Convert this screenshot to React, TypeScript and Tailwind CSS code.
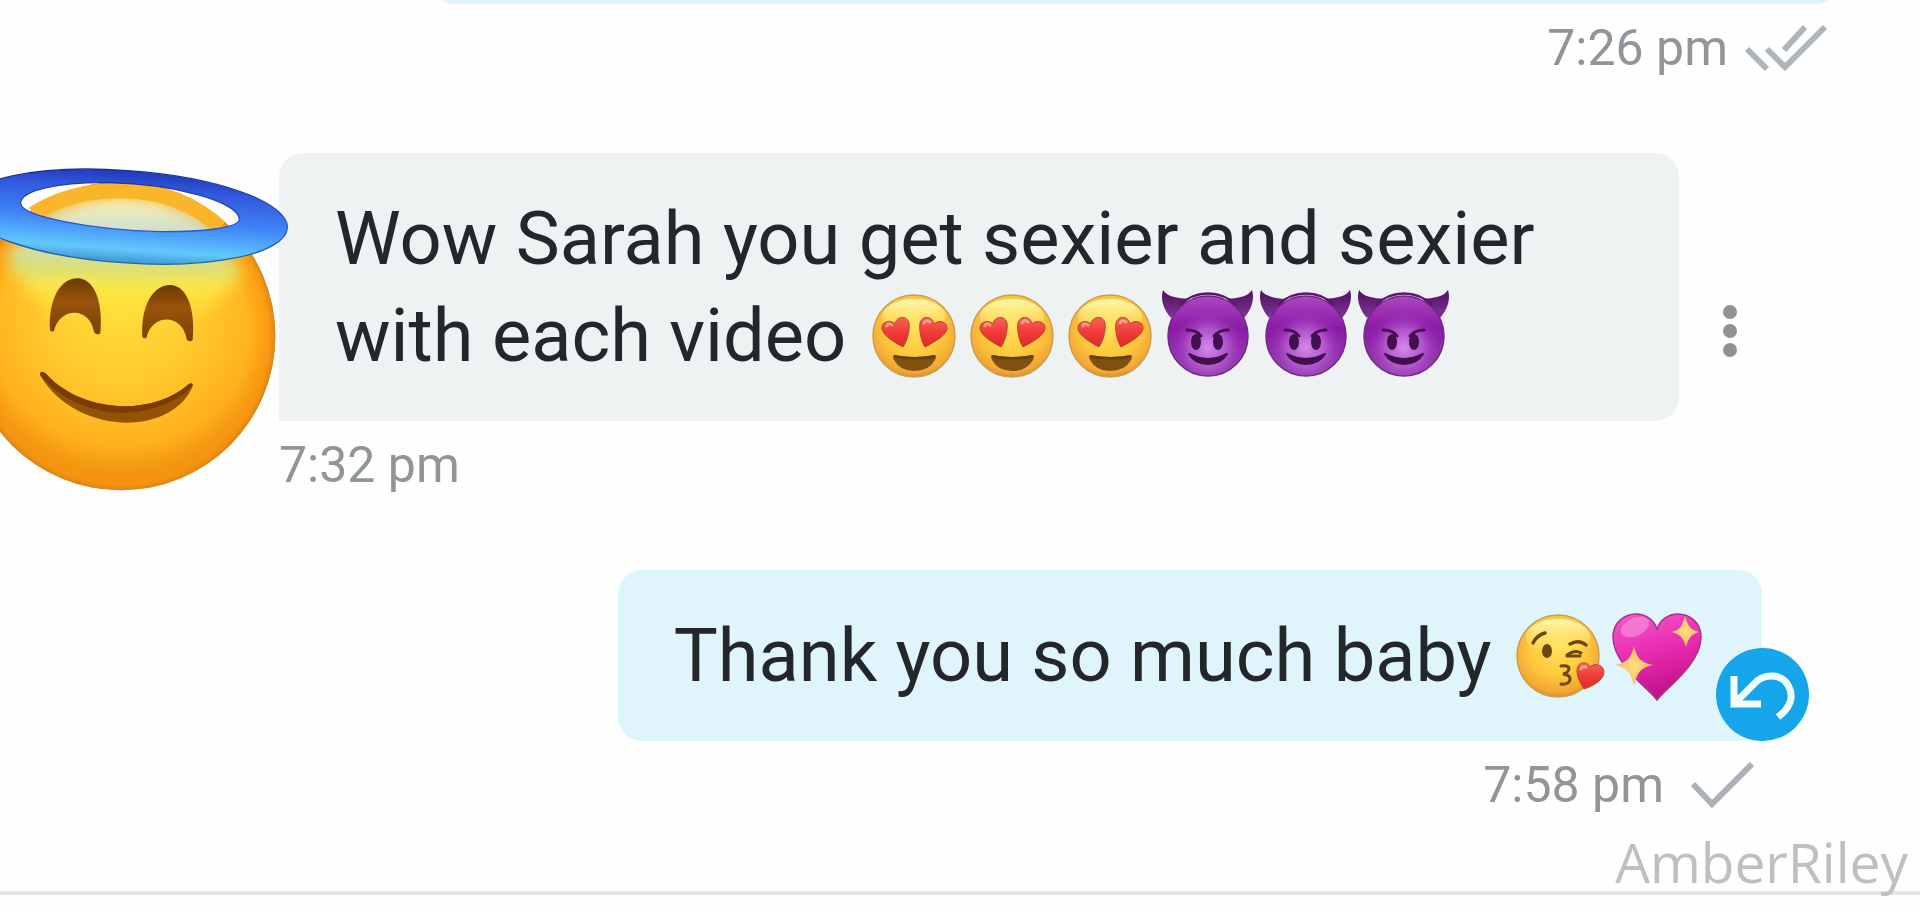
import type { ReactNode } from 'react';

function EmojiDefs() {
  return (
    <svg width="0" height="0" className="absolute" aria-hidden="true">
      <defs>
        <radialGradient id="face" cx="0.5" cy="0.38" r="0.64">
          <stop offset="0" stopColor="#ffe25c" />
          <stop offset="0.55" stopColor="#fdc93c" />
          <stop offset="0.88" stopColor="#f3a634" />
          <stop offset="1" stopColor="#c98a2e" />
        </radialGradient>
        <linearGradient id="shine" x1="0" y1="0" x2="0" y2="1">
          <stop offset="0" stopColor="#fffbb8" stopOpacity="0.95" />
          <stop offset="1" stopColor="#ffe763" stopOpacity="0" />
        </linearGradient>
        <linearGradient id="redHeart" x1="0" y1="0" x2="0" y2="1">
          <stop offset="0" stopColor="#f4655a" />
          <stop offset="0.5" stopColor="#f23a39" />
          <stop offset="1" stopColor="#dd2a2a" />
        </linearGradient>
        <linearGradient id="devilFace" x1="0" y1="0" x2="0" y2="1">
          <stop offset="0" stopColor="#ac48c0" />
          <stop offset="0.4" stopColor="#8a1aa6" />
          <stop offset="1" stopColor="#9a46b2" />
        </linearGradient>
        <radialGradient id="devilGlow" cx="0.5" cy="0.65" r="0.5">
          <stop offset="0" stopColor="#d48aea" />
          <stop offset="0.5" stopColor="#bb60d6" stopOpacity="0.75" />
          <stop offset="1" stopColor="#8c1fa8" stopOpacity="0" />
        </radialGradient>
        <linearGradient id="horn" x1="0" y1="0" x2="0" y2="1">
          <stop offset="0" stopColor="#4f0f5c" />
          <stop offset="1" stopColor="#80359a" />
        </linearGradient>
        <linearGradient id="pinkHeart" x1="0" y1="0" x2="0.3" y2="1">
          <stop offset="0" stopColor="#f25cc9" />
          <stop offset="0.5" stopColor="#e92db2" />
          <stop offset="1" stopColor="#c4128c" />
        </linearGradient>
        <radialGradient id="sparkle">
          <stop offset="0" stopColor="#ffe07a" />
          <stop offset="1" stopColor="#f9b66a" />
        </radialGradient>
      </defs>
    </svg>
  );
}

function Emoji({ label, children }: { label: string; children: ReactNode }) {
  return (
    <svg
      role="img"
      aria-label={label}
      viewBox="0 -1 98 84"
      className="inline-block h-[84px] w-[98px] overflow-visible align-middle"
    >
      {children}
    </svg>
  );
}

function HeartEyes() {
  return (
    <Emoji label="heart eyes">
      <circle cx="49" cy="36" r="41" fill="url(#face)" stroke="#c9a050" strokeWidth="1.5" />
      <ellipse cx="49" cy="17" rx="32" ry="18" fill="url(#shine)" />
      <g fill="url(#redHeart)" stroke="#b8442a" strokeWidth="1">
        <path d="M38 47 C31 43 19 37 17 29 C16 22 25 19 30 24 C31 16 42 15 44 23 C45 31 42 41 38 47Z" />
        <path d="M60 47 C67 43 80 37 82 29 C83 22 74 19 69 24 C68 16 57 15 55 23 C54 31 56 41 60 47Z" />
      </g>
      <path d="M22 26 Q23 22 27 25 M59 23 Q61 19 65 22" fill="none" stroke="#fa9a8a" strokeWidth="3" strokeLinecap="round" />
      <path d="M29 55 Q49 59 70 55 Q72 56 70 60 Q64 71 49 71 Q35 71 29 60 Q27 56 29 55Z" fill="#80500f" />
      <path d="M29 55 Q49 59 70 55 L69 58 Q49 61 30 58Z" fill="#63400c" />
    </Emoji>
  );
}

function Devil() {
  return (
    <Emoji label="smiling devil">
      <path d="M4 -10 C8 -3 19 -2 29 -1 L12 18 C5 10 1 0 4 -10Z" fill="url(#horn)" />
      <path d="M93 -10 C89 -3 78 -2 68 -1 L85 18 C92 10 96 0 93 -10Z" fill="url(#horn)" />
      <circle cx="49" cy="36" r="40" fill="url(#devilFace)" stroke="#6f2a86" strokeWidth="1.5" />
      <circle cx="49" cy="36" r="39" fill="url(#devilGlow)" />
      <path d="M21 5 A40 40 0 0 1 77 5" fill="none" stroke="#5d1670" strokeWidth="2.5" />
      <g fill="#42104f">
        <ellipse cx="37" cy="42" rx="5" ry="8" />
        <ellipse cx="59" cy="42" rx="5" ry="8" />
      </g>
      <g fill="none" stroke="#42104f" strokeWidth="3" strokeLinecap="round">
        <path d="M28 30 Q38 30 42 36" />
        <path d="M69 30 Q60 30 55 36" />
      </g>
      <path
        d="M30 54 Q49 64 68 54 Q62 64 49 64 Q36 64 30 54Z"
        fill="#42104f"
        stroke="#42104f"
        strokeWidth="2"
        strokeLinejoin="round"
      />
    </Emoji>
  );
}

function Kiss() {
  return (
    <Emoji label="face blowing a kiss">
      <circle cx="48" cy="36" r="41" fill="url(#face)" stroke="#c9a050" strokeWidth="1.5" />
      <ellipse cx="48" cy="17" rx="32" ry="18" fill="url(#shine)" />
      <g fill="none" stroke="#6d4710" strokeWidth="3.5" strokeLinecap="round">
        <path d="M23 23 Q27 15 35 13" />
        <path d="M60 24 Q69 19 76 25" />
        <path d="M57 35 Q65 29 71 33 M57 36 H70" strokeWidth="3" />
        <path d="M51 46 Q59 45 59 49 Q58 53 53 54 Q61 55 60 60 Q58 65 51 64" strokeWidth="3" />
      </g>
      <ellipse cx="37" cy="31" rx="5" ry="7" fill="#6d4710" />
      <path
        d="M74 69 C69 62 65 52 68 46 C71 41 78 42 80 47 C85 42 94 45 94 52 C94 60 83 66 74 69Z"
        fill="url(#redHeart)"
        stroke="#c04a26"
        strokeWidth="1"
      />
      <path d="M71 49 Q72 46 76 47" fill="none" stroke="#f9a28f" strokeWidth="3" strokeLinecap="round" />
    </Emoji>
  );
}

function SparklingHeart() {
  return (
    <Emoji label="sparkling heart">
      <path
        d="M49 80 C40 68 5 44 5 17 C5 2 17 -6 28 -6 C38 -6 46 0 49 9 C52 0 60 -6 70 -6 C81 -6 93 2 93 17 C93 44 58 68 49 80Z"
        fill="url(#pinkHeart)"
        stroke="#a8328a"
        strokeWidth="1.5"
      />
      <ellipse cx="27" cy="7" rx="15" ry="9" fill="#f9a5e2" opacity="0.5" transform="rotate(-25 27 7)" />
      <g fill="url(#sparkle)">
        <path d="M26 26 C29 38 32 42 45 45 C32 48 29 53 26 66 C23 53 20 48 7 45 C20 42 23 38 26 26Z" />
        <path d="M77 -4 C80 7 83 10 92 12 C83 14 81 17 78 27 C75 17 72 14 63 12 C72 10 74 7 77 -4Z" />
      </g>
    </Emoji>
  );
}

function AngelAvatar() {
  return (
    <svg
      role="img"
      aria-label="smiling face with halo"
      viewBox="0 39 837 1026"
      className="relative z-10 h-[342px] w-[279px] shrink-0 overflow-visible"
    >
      <defs>
        <radialGradient id="angelFace" cx="363" cy="500" r="560" gradientUnits="userSpaceOnUse">
          <stop offset="0" stopColor="#ffdc38" />
          <stop offset="0.4" stopColor="#ffcb30" />
          <stop offset="0.75" stopColor="#ffb01c" />
          <stop offset="1" stopColor="#e08008" />
        </radialGradient>
        <radialGradient id="angelRim" cx="363" cy="588" r="463" gradientUnits="userSpaceOnUse">
          <stop offset="0.82" stopColor="#fb9d10" stopOpacity="0" />
          <stop offset="0.96" stopColor="#fb9510" stopOpacity="0.75" />
          <stop offset="1" stopColor="#d8871c" />
        </radialGradient>
        <linearGradient id="angelGlow" x1="0" y1="180" x2="0" y2="580" gradientUnits="userSpaceOnUse">
          <stop offset="0" stopColor="#fdf3b8" />
          <stop offset="0.2" stopColor="#cfe0cf" />
          <stop offset="0.48" stopColor="#d2dd84" />
          <stop offset="0.66" stopColor="#fdec44" stopOpacity="0.85" />
          <stop offset="1" stopColor="#ffdc38" stopOpacity="0" />
        </linearGradient>
        <linearGradient id="halo" x1="450" y1="90" x2="430" y2="375" gradientUnits="userSpaceOnUse">
          <stop offset="0" stopColor="#1c37b4" />
          <stop offset="0.2" stopColor="#3257dc" />
          <stop offset="0.55" stopColor="#3f86f8" />
          <stop offset="0.85" stopColor="#62c8fc" />
          <stop offset="1" stopColor="#3f90d0" />
        </linearGradient>
        <linearGradient id="haloEdge" x1="0" y1="90" x2="0" y2="375" gradientUnits="userSpaceOnUse">
          <stop offset="0" stopColor="#1a2f9c" />
          <stop offset="0.6" stopColor="#2a55d4" />
          <stop offset="1" stopColor="#226a98" />
        </linearGradient>
        <linearGradient id="angelEye" x1="0" y1="0" x2="0" y2="1">
          <stop offset="0" stopColor="#6d3a02" />
          <stop offset="0.4" stopColor="#9a530c" />
          <stop offset="1" stopColor="#7a4203" />
        </linearGradient>
        <filter id="soft" x="-20%" y="-20%" width="140%" height="140%">
          <feGaussianBlur stdDeviation="22" />
        </filter>
        <clipPath id="angelHead">
          <circle cx="363" cy="588" r="450" />
        </clipPath>
      </defs>
      <circle cx="363" cy="588" r="463" fill="url(#angelFace)" />
      <circle cx="363" cy="588" r="463" fill="url(#angelRim)" />
      <g clipPath="url(#angelHead)">
        <path
          d="M120 240 Q230 172 370 172 Q520 176 640 262 L720 400 Q600 580 363 580 Q130 560 20 350Z"
          fill="url(#angelGlow)"
          filter="url(#soft)"
        />
      </g>
      <path
        d="M100 222 Q210 150 370 152 Q540 154 660 262"
        fill="none"
        stroke="#fbb52a"
        strokeWidth="46"
      />
      <path
        fillRule="evenodd"
        fill="url(#halo)"
        stroke="url(#haloEdge)"
        strokeWidth="4"
        d="M-112 196 C-107 119 115 72 382 92 C652 110 867 188 862 264 C857 341 635 388 368 368 C98 350 -117 272 -112 196Z M62 190 C62 150 180 125 330 128 C520 132 718 185 718 238 C718 265 600 276 480 275 C280 270 62 230 62 190Z"
      />
      <path d="M150 570 C145 480 180 415 232 415 C285 415 310 490 301 580 Q290 588 282 576 C270 500 180 500 162 572 Q154 578 150 570Z" fill="url(#angelEye)" />
      <path d="M427 590 C422 500 458 435 510 435 C562 435 587 510 578 600 Q567 608 560 598 C548 520 456 520 440 592 Q432 598 427 590Z" fill="url(#angelEye)" />
      <path d="M120 700 Q125 690 136 700 C250 825 460 825 564 734 Q575 724 579 736 C520 890 230 890 120 706Z" fill="#925304" />
      <path d="M120 700 Q125 690 136 700 C250 825 460 825 564 734 Q575 724 579 736 C470 850 240 850 120 704Z" fill="#7c3b02" />
    </svg>
  );
}

function SentTick() {
  return (
    <svg viewBox="0 0 64 48" className="h-[48px] w-[64px]" fill="none" stroke="#abb1b6" strokeWidth="6" aria-label="sent">
      <path d="M3 23 L22 43 L62 3" />
    </svg>
  );
}

function ReadTicks() {
  return (
    <svg viewBox="0 0 84 48" className="h-[48px] w-[84px]" fill="none" stroke="#adb5ba" strokeWidth="6" aria-label="read">
      <path d="M3 25 L23 45 M23 25 L41 43 L81 3 M40 26 L61 3" />
    </svg>
  );
}

function MessageTime({ time, children }: { time: string; children?: ReactNode }) {
  return (
    <div className="mt-[14px] flex h-[60px] items-center text-[50px] leading-[60px] text-[#8f9599]">
      <time>{time}</time>
      {children}
    </div>
  );
}

export default function App() {
  return (
    <main className="relative flex min-h-screen flex-col overflow-hidden bg-[#fefefe] font-[Roboto,sans-serif] text-[74px] leading-[97px] text-[#23272b]">
      <EmojiDefs />

      <section className="flex flex-col items-end pr-[80px]">
        <div className="h-1 w-full overflow-hidden pl-[430px]">
          <div className="-mt-14 h-[60px] rounded-3xl bg-[#e0f3fa]" />
        </div>
        <div className="pr-[12px]">
          <MessageTime time="7:26 pm">
            <span className="ml-4">
              <ReadTicks />
            </span>
          </MessageTime>
        </div>
      </section>

      <section className="mt-[75px] flex items-start">
        <AngelAvatar />
        <div className="max-w-[1400px] flex-1">
          <p className="rounded-3xl rounded-bl-none bg-[#eef2f3] px-[56px] py-[37px]">
            Wow Sarah you get sexier and sexier with each video{' '}
            <span className="whitespace-nowrap">
              <HeartEyes />
              <HeartEyes />
              <HeartEyes />
              <Devil />
              <Devil />
              <Devil />
            </span>
          </p>
          <MessageTime time="7:32 pm" />
        </div>
        <button type="button" aria-label="Message options" className="mt-[150px] ml-[41px] flex h-[56px] w-[20px] flex-col items-center justify-center gap-[5px]">
          <span className="size-[14px] rounded-full bg-[#8e9295]" />
          <span className="size-[14px] rounded-full bg-[#8e9295]" />
          <span className="size-[14px] rounded-full bg-[#8e9295]" />
        </button>
      </section>

      <section className="mt-[75px] flex flex-col items-end pr-[158px]">
        <div className="relative rounded-3xl bg-[#e0f4fb] px-[56px] py-[37px]">
          <p>
            Thank you so much baby{' '}
            <span className="whitespace-nowrap">
              <Kiss />
              <SparklingHeart />
            </span>
          </p>
          <button
            type="button"
            aria-label="Undo"
            className="absolute -right-[47px] bottom-0 size-[93px] rounded-full bg-[#14a5ea]"
          >
            <svg viewBox="-46 -46 93 93" fill="none" stroke="#f2fdff" strokeWidth="7">
              <path d="M-28 -18 V10 H-1 M-27 9 L-9 -9 C0 -20 18 -22 26 -9 C33 3 28 14 16 23" />
            </svg>
          </button>
        </div>
        <div className="pr-[8px]">
          <MessageTime time="7:58 pm">
            <span className="ml-[26px]">
              <SentTick />
            </span>
          </MessageTime>
        </div>
      </section>

      <hr className="mt-[76px] border-t-4 border-[#e5e5e5]" />
      <span className="absolute right-3 bottom-[13px] font-['Open_Sans',sans-serif] text-[55px] leading-[72px] text-[#bfbfbf]">
        AmberRiley
      </span>
    </main>
  );
}
